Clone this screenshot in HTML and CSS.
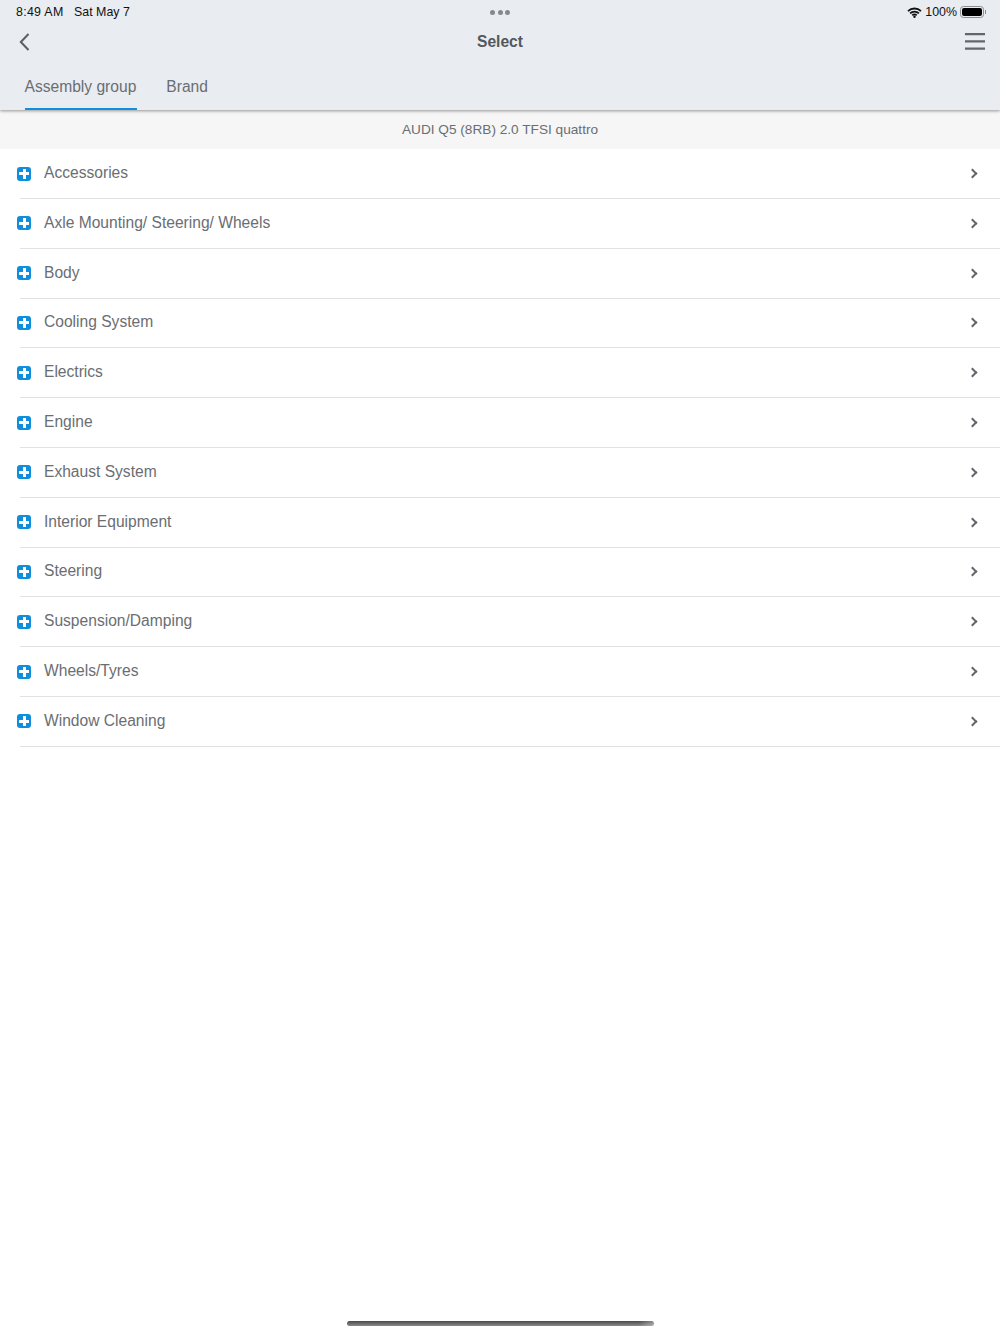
FILE: index.html
```html
<!DOCTYPE html>
<html lang="en">
<head>
    <meta charset="UTF-8">
    <meta name="viewport" content="width=device-width, initial-scale=1.0">
    <title>Select</title>
    <link rel="stylesheet" href="styles.css">
</head>
<body>
    <div class="header">
        <div class="status-bar">
            <div class="status-left"><span class="status-time">8:49 AM</span><span>Sat May 7</span></div>
            <div class="status-dots"><i></i><i></i><i></i></div>
            <div class="status-right">
                <svg class="wifi" width="15" height="11" viewBox="0 0 15 11"><path d="M1 4.2a9.2 9.2 0 0 1 13 0M3.1 6.4a6.2 6.2 0 0 1 8.8 0M5.3 8.4a3 3 0 0 1 4.4 0" fill="none" stroke="#111" stroke-width="1.8"/><circle cx="7.5" cy="9.8" r="1.2" fill="#111"/></svg>
                <span>100%</span>
                <div class="battery"><div class="battery-fill"></div></div>
                <div class="battery-tip"></div>
            </div>
        </div>
        <div class="nav-bar">
            <div class="nav-side">
                <svg class="back" width="12" height="18" viewBox="0 0 12 18"><path d="M10.500 1 2.800 9l7.700 8" fill="none" stroke="#5a5e62" stroke-width="2"/></svg>
            </div>
            <div class="nav-title">Select</div>
            <div class="nav-side nav-side-right">
                <svg width="20" height="18" viewBox="0 0 20 18"><path d="M0 2.200h20M0 9.400h20M0 16.600h20" fill="none" stroke="#63676b" stroke-width="2.300"/></svg>
            </div>
        </div>
        <div class="tabs">
            <div class="tab active">Assembly group</div>
            <div class="tab">Brand</div>
        </div>
    </div>
    <div class="vehicle">AUDI Q5 (8RB) 2.0 TFSI quattro</div>
    <ul class="groups">
        <li class="group"><span class="plus"></span><span class="group-name">Accessories</span><span class="chev"></span></li>
        <li class="group"><span class="plus"></span><span class="group-name">Axle Mounting/ Steering/ Wheels</span><span class="chev"></span></li>
        <li class="group"><span class="plus"></span><span class="group-name">Body</span><span class="chev"></span></li>
        <li class="group"><span class="plus"></span><span class="group-name">Cooling System</span><span class="chev"></span></li>
        <li class="group"><span class="plus"></span><span class="group-name">Electrics</span><span class="chev"></span></li>
        <li class="group"><span class="plus"></span><span class="group-name">Engine</span><span class="chev"></span></li>
        <li class="group"><span class="plus"></span><span class="group-name">Exhaust System</span><span class="chev"></span></li>
        <li class="group"><span class="plus"></span><span class="group-name">Interior Equipment</span><span class="chev"></span></li>
        <li class="group"><span class="plus"></span><span class="group-name">Steering</span><span class="chev"></span></li>
        <li class="group"><span class="plus"></span><span class="group-name">Suspension/Damping</span><span class="chev"></span></li>
        <li class="group"><span class="plus"></span><span class="group-name">Wheels/Tyres</span><span class="chev"></span></li>
        <li class="group"><span class="plus"></span><span class="group-name">Window Cleaning</span><span class="chev"></span></li>
    </ul>
    <div class="home-bar"></div>
</body>
</html>
```

FILE: styles.css
```css
* { box-sizing: border-box; }
html, body { margin: 0; padding: 0; }
body {
    width: 1000px;
    height: 1334px;
    position: relative;
    overflow: hidden;
    background: #fff;
    font-family: "Liberation Sans", Arial, sans-serif;
    color: #6a6e72;
}
.header {
    height: 110px;
    background: #e9ecf1;
    box-shadow: 0 1px 3px rgba(0,0,0,0.4);
    position: relative;
}
.status-bar {
    height: 24px;
    padding: 0 14px 0 16px;
    display: flex;
    align-items: center;
    justify-content: space-between;
    font-size: 12.4px;
    color: #111;
}
.status-left { display: flex; gap: 10.5px; width: 200px; }
.status-time { letter-spacing: 0.3px; }
.status-dots { display: flex; gap: 2.5px; margin-left: -2px; }
.status-dots i { width: 5px; height: 5px; border-radius: 50%; background: #85888d; }
.status-right { display: flex; align-items: center; justify-content: flex-end; width: 200px; }
.wifi { margin-right: 3px; }
.battery {
    width: 24px;
    height: 12px;
    margin-left: 3px;
    border: 1px solid #8a8c90;
    border-radius: 3.5px;
    padding: 1px;
}
.battery-fill { height: 100%; background: #000; border-radius: 2px; }
.battery-tip { width: 1px; height: 4px; margin-left: 1px; background: #8a8c90; }
.nav-bar {
    height: 34px;
    padding: 0 15px 0 18px;
    display: flex;
    align-items: center;
    justify-content: space-between;
}
.nav-side { width: 24px; display: flex; }
.nav-side-right { justify-content: flex-end; }
.back { margin-top: 1px; }
.nav-title { font-size: 15.6px; font-weight: bold; color: #54585c; margin: 1px 0 0 -3px; }
.tabs { display: flex; gap: 29.5px; padding: 0 0 0 24.5px; margin-top: 8px; }
.tab { height: 44px; padding: 12px 0.5px 0 0; font-size: 15.6px; color: #6a6e72; }
.tab.active { border-bottom: 2px solid #0f8fdb; }
.vehicle {
    height: 39px;
    background: #f6f6f6;
    text-align: center;
    line-height: 39px;
    font-size: 13.65px;
}
.groups { list-style: none; margin: 0; padding: 0.2px 0 0; }
.group {
    height: 49.8px;
    display: flex;
    align-items: center;
    padding: 0 24px 0 17px;
    position: relative;
}
.group::after {
    content: "";
    position: absolute;
    left: 20px;
    right: 0;
    bottom: 0;
    height: 1px;
    background: #e2e2e2;
}
.plus {
    width: 14px;
    height: 14px;
    margin-top: -1px;
    border-radius: 3px;
    background:
        linear-gradient(#fff, #fff) center / 10px 3px no-repeat,
        linear-gradient(#fff, #fff) center / 3px 10px no-repeat,
        #0f8fdb;
}
.group-name { flex: 1; margin-left: 13px; font-size: 15.6px; color: #6a6e72; margin-top: -2px; }
.chev {
    width: 7px;
    height: 7px;
    margin-top: -1px;
    border-top: 2px solid #63676b;
    border-right: 2px solid #63676b;
    transform: rotate(45deg);
}
.home-bar {
    position: absolute;
    left: 347px;
    top: 1321px;
    width: 307px;
    height: 5px;
    border-radius: 3px;
    background:
        linear-gradient(90deg, transparent 95%, rgba(255,255,255,0.35)),
        linear-gradient(#4a4a4a, #8a8a8a);
}
```
